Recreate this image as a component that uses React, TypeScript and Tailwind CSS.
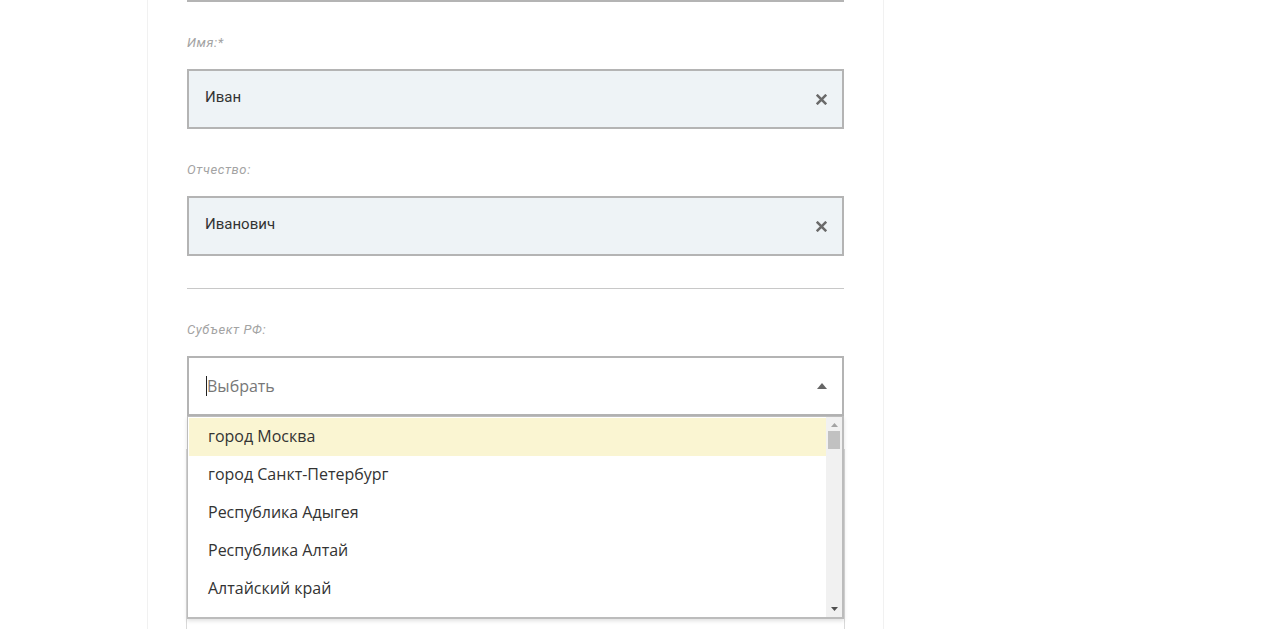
import React from 'react';

const regions = [
    'город Москва',
    'город Санкт-Петербург',
    'Республика Адыгея',
    'Республика Алтай',
    'Алтайский край',
];

function Label({ text }: { text: string }) {
    return (
        <p className="h-[16px] text-[13px] leading-[16px] italic tracking-[0.6px] text-[#a3a3a3] font-['Roboto',sans-serif]">
            {text}
        </p>
    );
}

function Field({ label, value }: { label: string; value: string }) {
    return (
        <div className="mt-[33px]">
            <Label text={label} />
            <div className="mt-[18px] h-[60px] border-2 border-[#b4b4b4] bg-[#eef3f6] flex items-center pl-[16px] pr-[14px]">
                <span className="flex-1 pb-[4px] text-[15px] text-[#333] font-['Roboto',sans-serif]">{value}</span>
                <svg width="11" height="11" viewBox="0 0 10 10" className="mr-[1px]">
                    <path d="M1.5 1.5 L8.5 8.5 M8.5 1.5 L1.5 8.5" stroke="#6a6a6a" strokeWidth="2.3" strokeLinecap="square" />
                </svg>
            </div>
        </div>
    );
}

export default function App(): JSX.Element {
    return (
        <div className="h-[629px] overflow-hidden bg-white">
            <div className="ml-[147px] w-[737px] h-full border-x border-[#f1f1f1] px-[39px]">
                <div className="h-[2px] bg-[#b4b4b4]" />
                <Field label="Имя:*" value="Иван" />
                <Field label="Отчество:" value="Иванович" />
                <div className="mt-[32px] h-px bg-[#c8c8c8]" />

                <div className="mt-[33px]">
                    <Label text="Субъект РФ:" />
                    <div className="relative mt-[18px]">
                        <div className="h-[60px] border-2 border-[#b4b4b4] bg-white flex items-center pl-[17px] pr-[15px]">
                            <span className="w-px h-[20px] bg-[#222]" />
                            <span className="flex-1 text-[16px] text-[#777] font-['Open_Sans',sans-serif]">Выбрать</span>
                            <svg width="10" height="6" viewBox="0 0 10 6">
                                <path d="M0 6 L5 0 L10 6 Z" fill="#666" />
                            </svg>
                        </div>

                        {/* open list */}
                        <div className="absolute left-0 right-0 top-[60px] z-10 h-[203px] bg-white border border-[#bcbcbc] border-b-2 border-r-2 shadow-[0_2px_4px_rgba(0,0,0,0.12)] flex">
                            <ul className="flex-1 pl-px pt-px">
                                {regions.map((r, i) => (
                                    <li
                                        key={r}
                                        className={`h-[38px] flex items-center pl-[19px] pb-[2px] text-[16px] text-[#333] font-['Open_Sans',sans-serif] ${i === 0 ? 'bg-[#faf5d2]' : ''}`}
                                    >
                                        {r}
                                    </li>
                                ))}
                            </ul>
                            <div className="w-[16px] bg-[#f1f1f1] flex flex-col items-center">
                                <svg width="7" height="4" viewBox="0 0 7 4" className="mt-[6px]">
                                    <path d="M0 4 L3.5 0 L7 4 Z" fill="#a3a3a3" />
                                </svg>
                                <div className="mt-[4px] w-[12px] h-[18px] bg-[#c1c1c1]" />
                                <div className="flex-1" />
                                <svg width="7" height="4" viewBox="0 0 7 4" className="mb-[6px]">
                                    <path d="M0 0 L3.5 4 L7 0 Z" fill="#505050" />
                                </svg>
                            </div>
                        </div>
                    </div>
                </div>

                {/* field under the open list */}
                <div className="mt-[33px] -mx-px h-[300px] border border-[#d9d9d9] bg-white" />
            </div>
        </div>
    );
}
